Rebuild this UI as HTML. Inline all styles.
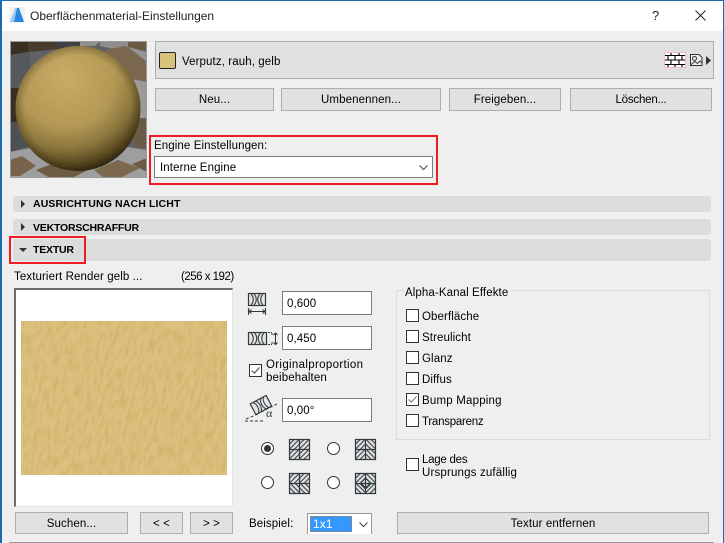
<!DOCTYPE html>
<html><head><meta charset="utf-8">
<style>
html,body{margin:0;padding:0;background:#efefef}
body{width:724px;height:543px;position:relative;overflow:hidden;font:11.5px/13px "Liberation Sans",sans-serif;color:#000;letter-spacing:.1px}
.a{position:absolute;white-space:nowrap}
.b{position:absolute;box-sizing:border-box;background:#e1e1e1;border:1px solid #adadad;text-align:center;height:23px;line-height:22px}
.s{position:absolute;left:13px;width:698px;background:#dcdcdc;border-radius:3px;box-sizing:border-box}
.s b{position:absolute;left:20px;font-size:10.500px}
.f{position:absolute;left:282px;width:90px;height:24px;box-sizing:border-box;background:#fff;border:1px solid #7a7a7a;line-height:25px;padding-left:4px}
.c{position:absolute;left:406px;width:13px;height:13px;box-sizing:border-box;background:#fff;border:1px solid #333}
.t{position:absolute;left:422px;white-space:nowrap}
.r{position:absolute;width:13px;height:13px;box-sizing:border-box;background:#fff;border:1px solid #333;border-radius:50%}
svg{position:absolute;overflow:visible}
</style></head><body>
<!-- window frame -->
<div class="a" style="left:0;top:0;width:724px;height:31px;background:#fff"></div>
<div class="a" style="left:0;top:0;width:724px;height:1px;background:#1b6ab0"></div>
<div class="a" style="left:0;top:0;width:1.5px;height:543px;background:#1b6ab0"></div>
<div class="a" style="left:723px;top:0;width:1px;height:543px;background:#1b6ab0"></div>
<div class="a" style="left:9px;top:542px;width:705px;height:1px;background:#999"></div>

<svg style="left:9px;top:7px" width="16" height="16"><rect width="16" height="16" fill="#f1f1f1"/><path d="M1 15 L6 1 L8 1 L5 15Z" fill="#9cc8f0"/><path d="M5 15 L8 1 L10 1 L15 15Z" fill="#2a86e0"/></svg>
<div class="a" style="left:30px;top:10px;font-size:12px;color:#222;letter-spacing:0">Oberflächenmaterial-Einstellungen</div>
<div class="a" style="left:652px;top:9px;font-size:13px;color:#222">?</div>
<svg style="left:695px;top:10px" width="11" height="11"><path d="M.5 .5L10.500 10.500M10.500 .5L.5 10.500" stroke="#222" stroke-width="1" fill="none"/></svg>

<!-- preview -->
<svg style="left:10px;top:41px" width="137" height="137" viewBox="10 41 137 137">
<defs>
<filter id="n" x="0" y="0" width="100%" height="100%"><feTurbulence type="fractalNoise" baseFrequency=".8" numOctaves="2" seed="4"/><feColorMatrix values="0 0 0 0 .25  0 0 0 0 .17  0 0 0 0 .04  2 0 0 0 -.75"/></filter>
<radialGradient id="g" gradientUnits="userSpaceOnUse" cx="66" cy="78" r="98"><stop offset="0" stop-color="#d0b26c"/><stop offset=".5" stop-color="#b89d58"/><stop offset=".72" stop-color="#8c773e"/><stop offset=".9" stop-color="#4c3d1a"/><stop offset="1" stop-color="#1a140a"/></radialGradient>
<radialGradient id="e" gradientUnits="userSpaceOnUse" cx="78" cy="108.500" r="62.500"><stop offset=".85" stop-color="#2a200a" stop-opacity="0"/><stop offset="1" stop-color="#2a200a" stop-opacity=".3"/></radialGradient>
<clipPath id="cp"><circle cx="78" cy="108.500" r="62.500"/></clipPath>
</defs>
<rect x="10" y="41" width="137" height="137" fill="#5f6266"/>
<path d="M10 41H28V52L10 55Z" fill="#3b2f22"/>
<path d="M28 41H80V46L50 50L28 52Z" fill="#4a3c2c"/>
<path d="M55 41H80V46L58 48Z" fill="#3d4044"/>
<path d="M80 41H100L95 46H80Z" fill="#8f8f90"/>
<path d="M100 41H138V46L118 50L100 46Z" fill="#8d8d8e"/>
<path d="M128 41H147V52L128 47Z" fill="#6d5a42"/>
<path d="M105 50L125 46L147 55V82L125 76Z" fill="#7b6650"/>
<path d="M128 47L147 52V62Z" fill="#929394"/>
<path d="M127 78L147 82V122L130 118Z" fill="#9b9b9c"/>
<path d="M10 55L30 52V88L10 88Z" fill="#55585c"/>
<path d="M10 88H22V122H10Z" fill="#3a2e20"/>
<path d="M132 118H147V148H134Z" fill="#6a5b48"/>
<path d="M10 122H30V146L10 152Z" fill="#4d5054"/>
<path d="M10 152L40 146H120L147 150V178H10Z" fill="#9d9e9f"/>
<path d="M10 160L22 156L36 166L20 176H10Z" fill="#77634a"/>
<path d="M36 170L62 160L88 170L72 178H50Z" fill="#6f5c44"/>
<path d="M94 170L118 160L140 168L120 178H104Z" fill="#7b684e"/>
<path d="M132 164L147 158V172Z" fill="#6d5a42"/>
<circle cx="78" cy="108.500" r="62.500" fill="url(#g)"/>
<rect x="15" y="45" width="126" height="127" filter="url(#n)" clip-path="url(#cp)" opacity=".35"/>
<circle cx="78" cy="108.500" r="62.500" fill="url(#e)"/>
<rect x="10.500" y="41.500" width="136" height="136" fill="none" stroke="#9a9a9a"/>
</svg>

<!-- material box -->
<div class="a" style="left:155px;top:41px;width:559px;height:38px;box-sizing:border-box;background:#e0e0e0;border:1px solid #adadad"></div>
<div class="a" style="left:159px;top:52px;width:17px;height:17px;box-sizing:border-box;background:#d9c27c;border:1px solid #222;border-radius:2px"></div>
<div class="a" style="left:182px;top:56px">Verputz, rauh, gelb</div>
<svg style="left:664px;top:52px" width="22" height="16"><rect x=".5" y=".5" width="21" height="15" fill="#fff" stroke="#f4bcbc"/><path d="M1 3.500H21M1 8H21M1 12.500H21M7 1V3.500M15 1V3.500M4 3.500V8M11 3.500V8M18 3.500V8M7 8V12.500M15 8V12.500M4 12.500V15M11 12.500V15M18 12.500V15" stroke="#000" stroke-width="1.100" fill="none"/></svg>
<svg style="left:690px;top:54px" width="13" height="12"><path d="M.5 .5H9L12 3.500V11.500H.5Z" fill="#eee" stroke="#333"/><circle cx="4.500" cy="4.500" r="2" fill="none" stroke="#333"/><path d="M1 10.500L5 7.500L7.500 9.500L10 7L12 9" fill="none" stroke="#333"/></svg>
<svg style="left:706px;top:56px" width="5" height="9"><path d="M0 0L5 4.500L0 9Z" fill="#333"/></svg>

<div class="b" style="left:155px;top:88px;width:119px">Neu...</div>
<div class="b" style="left:281px;top:88px;width:160px">Umbenennen...</div>
<div class="b" style="left:449px;top:88px;width:112px">Freigeben...</div>
<div class="b" style="left:570px;top:88px;width:142px;letter-spacing:-.2px">Löschen...</div>

<!-- engine -->
<div class="a" style="left:149px;top:135px;width:289px;height:50px;box-sizing:border-box;border:2px solid #ee1c25"></div>
<div class="a" style="left:154px;top:140px">Engine Einstellungen:</div>
<div class="a" style="left:154px;top:156px;width:279px;height:22px;box-sizing:border-box;background:#fff;border:1px solid #7a7a7a;line-height:22px;padding-left:5px">Interne Engine</div>
<svg style="left:419px;top:165px" width="9" height="5"><path d="M.5 .5L4.500 4.500L8.500 .5" fill="none" stroke="#444"/></svg>

<!-- sections -->
<div class="s" style="top:196px;height:16px"><b style="top:2px;letter-spacing:.13px">AUSRICHTUNG NACH LICHT</b></div>
<svg style="left:21px;top:200px" width="4" height="8"><path d="M0 0L4 4L0 8Z" fill="#333"/></svg>
<div class="s" style="top:219px;height:16px"><b style="top:3px;letter-spacing:-.2px">VEKTORSCHRAFFUR</b></div>
<svg style="left:21px;top:223px" width="4" height="8"><path d="M0 0L4 4L0 8Z" fill="#333"/></svg>
<div class="s" style="top:239px;height:22px"><b style="top:5px;letter-spacing:-.2px">TEXTUR</b></div>
<svg style="left:19px;top:248px" width="8" height="4"><path d="M0 0H8L4 4Z" fill="#333"/></svg>
<div class="a" style="left:9px;top:236px;width:77px;height:28px;box-sizing:border-box;border:2px solid #ee1c25"></div>

<div class="a" style="left:14px;top:271px">Texturiert Render gelb ...</div>
<div class="a" style="left:181px;top:271px;letter-spacing:-.5px">(256 x 192)</div>

<!-- texture box -->
<div class="a" style="left:14px;top:288px;width:219px;height:219px;box-sizing:border-box;background:#fff;border:1px solid #e3e3e3;border-top:2px solid #6b6b6b;border-left:2px solid #6b6b6b"></div>
<svg style="left:21px;top:321px;overflow:hidden" width="206" height="154">
<defs><filter id="tx" x="0" y="0" width="100%" height="100%"><feTurbulence type="fractalNoise" baseFrequency=".28 .08" numOctaves="3" seed="8"/><feColorMatrix values="0 0 0 0 .55  0 0 0 0 .4  0 0 0 0 .12  2.400 0 0 0 -.95"/></filter></defs>
<rect width="206" height="154" fill="#dcc17e"/>
<g transform="rotate(14 103 77)"><rect x="-40" y="-40" width="290" height="240" filter="url(#tx)" opacity=".55"/></g>
</svg>

<div class="b" style="left:15px;top:512px;width:113px;height:22px;line-height:22px">Suchen...</div>
<div class="b" style="left:140px;top:512px;width:43px;height:22px;line-height:22px">&lt; &lt;</div>
<div class="b" style="left:190px;top:512px;width:43px;height:22px;line-height:22px">&gt; &gt;</div>

<!-- size icons -->
<svg style="left:248px;top:293px" width="18" height="23"><rect x=".5" y=".5" width="17" height="12" fill="#e4e4e4" stroke="#2f3a3e" stroke-width="1.200"/><path d="M3 1C6 4 6 9 3 12M6 1C9 4 9 9 6 12M12 1C9 4 9 9 12 12M15 1C12 4 12 9 15 12" stroke="#2f3a3e" stroke-width="1.100" fill="none"/><path d="M.5 15V22M17.500 15V22M1 18.500H17M3.500 16.500L1 18.500L3.500 20.500M14.500 16.500L17 18.500L14.500 20.500" stroke="#2f3a3e" stroke-width="1.100" fill="none"/></svg>
<svg style="left:248px;top:332px" width="30" height="14"><rect x=".5" y=".5" width="18" height="12" fill="#e4e4e4" stroke="#2f3a3e" stroke-width="1.200"/><path d="M3 1C6 4 6 9 3 12M6.500 1C9.500 4 9.500 9 6.500 12M12.500 1C9.500 4 9.500 9 12.500 12M16 1C13 4 13 9 16 12" stroke="#2f3a3e" stroke-width="1.100" fill="none"/><path d="M20 .5H24M20 12.500H24" stroke="#2f3a3e" stroke-dasharray="2 1"/><path d="M24 1V3M24 10V12" stroke="#2f3a3e"/><path d="M27.500 1V12.500M25.500 3L27.500 1L29.500 3M25.500 10.500L27.500 12.500L29.500 10.500" stroke="#2f3a3e" stroke-width="1.100" fill="none"/></svg>
<div class="f" style="top:291px">0,600</div>
<div class="f" style="top:326px">0,450</div>
<div class="a" style="left:249px;top:364px;width:13px;height:13px;box-sizing:border-box;background:#fff;border:1px solid #333"></div>
<svg style="left:251px;top:367px" width="9" height="7"><path d="M.5 3.500L3.500 6L8.500 .5" fill="none" stroke="#444"/></svg>
<div class="a" style="left:266px;top:359px;letter-spacing:.33px">Originalproportion</div>
<div class="a" style="left:266px;top:372px;letter-spacing:.13px">beibehalten</div>
<svg style="left:244px;top:395px" width="34" height="26"><g transform="rotate(-28 17 10)"><rect x="8" y="4" width="18" height="12" fill="#e4e4e4" stroke="#2f3a3e" stroke-width="1.200"/><path d="M11 4C14 7 14 13 11 16M14 4C17 7 17 13 14 16M20 4C17 7 17 13 20 16M23 4C20 7 20 13 23 16" stroke="#2f3a3e" fill="none"/></g><path d="M17 17L33 9" stroke="#2f3a3e" stroke-dasharray="3 2"/><path d="M1 26H21" stroke="#2f3a3e" stroke-dasharray="3 2"/><path d="M2 24L14 19" stroke="#2f3a3e" stroke-dasharray="3 2"/><text x="22" y="22" font-size="12" font-family="Liberation Serif" fill="#2f3a3e">α</text></svg>
<div class="f" style="top:398px">0,00°</div>

<!-- tile radios -->
<div class="r" style="left:261px;top:442px"></div><div class="a" style="left:264px;top:445px;width:7px;height:7px;border-radius:50%;background:#333"></div>
<div class="r" style="left:327px;top:442px"></div>
<div class="r" style="left:261px;top:476px"></div>
<div class="r" style="left:327px;top:476px"></div>
<svg width="0" height="0"><defs>
<pattern id="h1" width="3.500" height="3.500" patternUnits="userSpaceOnUse" patternTransform="rotate(45)"><rect width="3.500" height="3.500" fill="#dedede"/><rect width="1" height="3.500" fill="#2f3a3e"/></pattern>
<pattern id="h2" width="3.500" height="3.500" patternUnits="userSpaceOnUse" patternTransform="rotate(-45)"><rect width="3.500" height="3.500" fill="#dedede"/><rect width="1" height="3.500" fill="#2f3a3e"/></pattern>
</defs></svg>
<svg style="left:289px;top:439px" width="21" height="21"><rect width="21" height="21" fill="url(#h1)"/><path d="M.5 .5H20.500V20.500H.5ZM10.500 0V21M0 10.500H21" fill="none" stroke="#2f3a3e" stroke-width="1.200"/></svg>
<svg style="left:355px;top:439px" width="21" height="21"><rect width="10.500" height="21" fill="url(#h1)"/><rect x="10.500" width="10.500" height="21" fill="url(#h2)"/><path d="M.5 .5H20.500V20.500H.5ZM10.500 0V21M0 10.500H21" fill="none" stroke="#2f3a3e" stroke-width="1.200"/></svg>
<svg style="left:289px;top:473px" width="21" height="21"><rect width="21" height="10.500" fill="url(#h1)"/><rect y="10.500" width="21" height="10.500" fill="url(#h2)"/><path d="M.5 .5H20.500V20.500H.5ZM10.500 0V21M0 10.500H21" fill="none" stroke="#2f3a3e" stroke-width="1.200"/></svg>
<svg style="left:355px;top:473px" width="21" height="21"><rect width="10.500" height="10.500" fill="url(#h1)"/><rect x="10.500" width="10.500" height="10.500" fill="url(#h2)"/><rect y="10.500" width="10.500" height="10.500" fill="url(#h2)"/><rect x="10.500" y="10.500" width="10.500" height="10.500" fill="url(#h1)"/><path d="M.5 .5H20.500V20.500H.5ZM10.500 0V21M0 10.500H21M10.500 5L16 10.500L10.500 16L5 10.500Z" fill="none" stroke="#2f3a3e" stroke-width="1.200"/></svg>

<div class="a" style="left:249px;top:518px">Beispiel:</div>
<div class="a" style="left:307px;top:513px;width:65px;height:21px;box-sizing:border-box;background:#fff;border:1px solid #999;border-bottom:0"></div>
<div class="a" style="left:310px;top:516px;width:42px;height:16px;box-sizing:border-box;background:#3399ff;color:#fff;line-height:17px;padding-left:3px;outline:1px dotted #b5763a;outline-offset:-1px;font-size:12px">1x1</div>
<svg style="left:359px;top:522px" width="9" height="5"><path d="M.5 .5L4.500 4.500L8.500 .5" fill="none" stroke="#444"/></svg>

<!-- alpha group -->
<div class="a" style="left:396px;top:290px;width:314px;height:150px;box-sizing:border-box;border:1px solid #dcdcdc"></div>
<div class="a" style="left:404px;top:285px;background:#efefef;padding:0 3px 0 1px;line-height:14px;height:13px"><span style="position:relative;top:1px">Alpha-Kanal Effekte</span></div>
<div class="c" style="top:309px"></div><div class="t" style="top:311px">Oberfläche</div>
<div class="c" style="top:330px"></div><div class="t" style="top:332px">Streulicht</div>
<div class="c" style="top:351px"></div><div class="t" style="top:353px">Glanz</div>
<div class="c" style="top:372px"></div><div class="t" style="top:374px">Diffus</div>
<div class="c" style="top:393px"></div><svg style="left:408px;top:396px" width="9" height="7"><path d="M.5 3.500L3.500 6L8.500 .5" fill="none" stroke="#777"/></svg><div class="t" style="top:395px;letter-spacing:.2px">Bump Mapping</div>
<div class="c" style="top:414px"></div><div class="t" style="top:416px;letter-spacing:-.25px">Transparenz</div>
<div class="c" style="top:458px"></div>
<div class="t" style="top:454px;letter-spacing:-.25px">Lage des</div>
<div class="t" style="top:467px;letter-spacing:.17px">Ursprungs zufällig</div>
<div class="b" style="left:397px;top:512px;width:312px;height:22px;line-height:22px">Textur entfernen</div>
</body></html>
